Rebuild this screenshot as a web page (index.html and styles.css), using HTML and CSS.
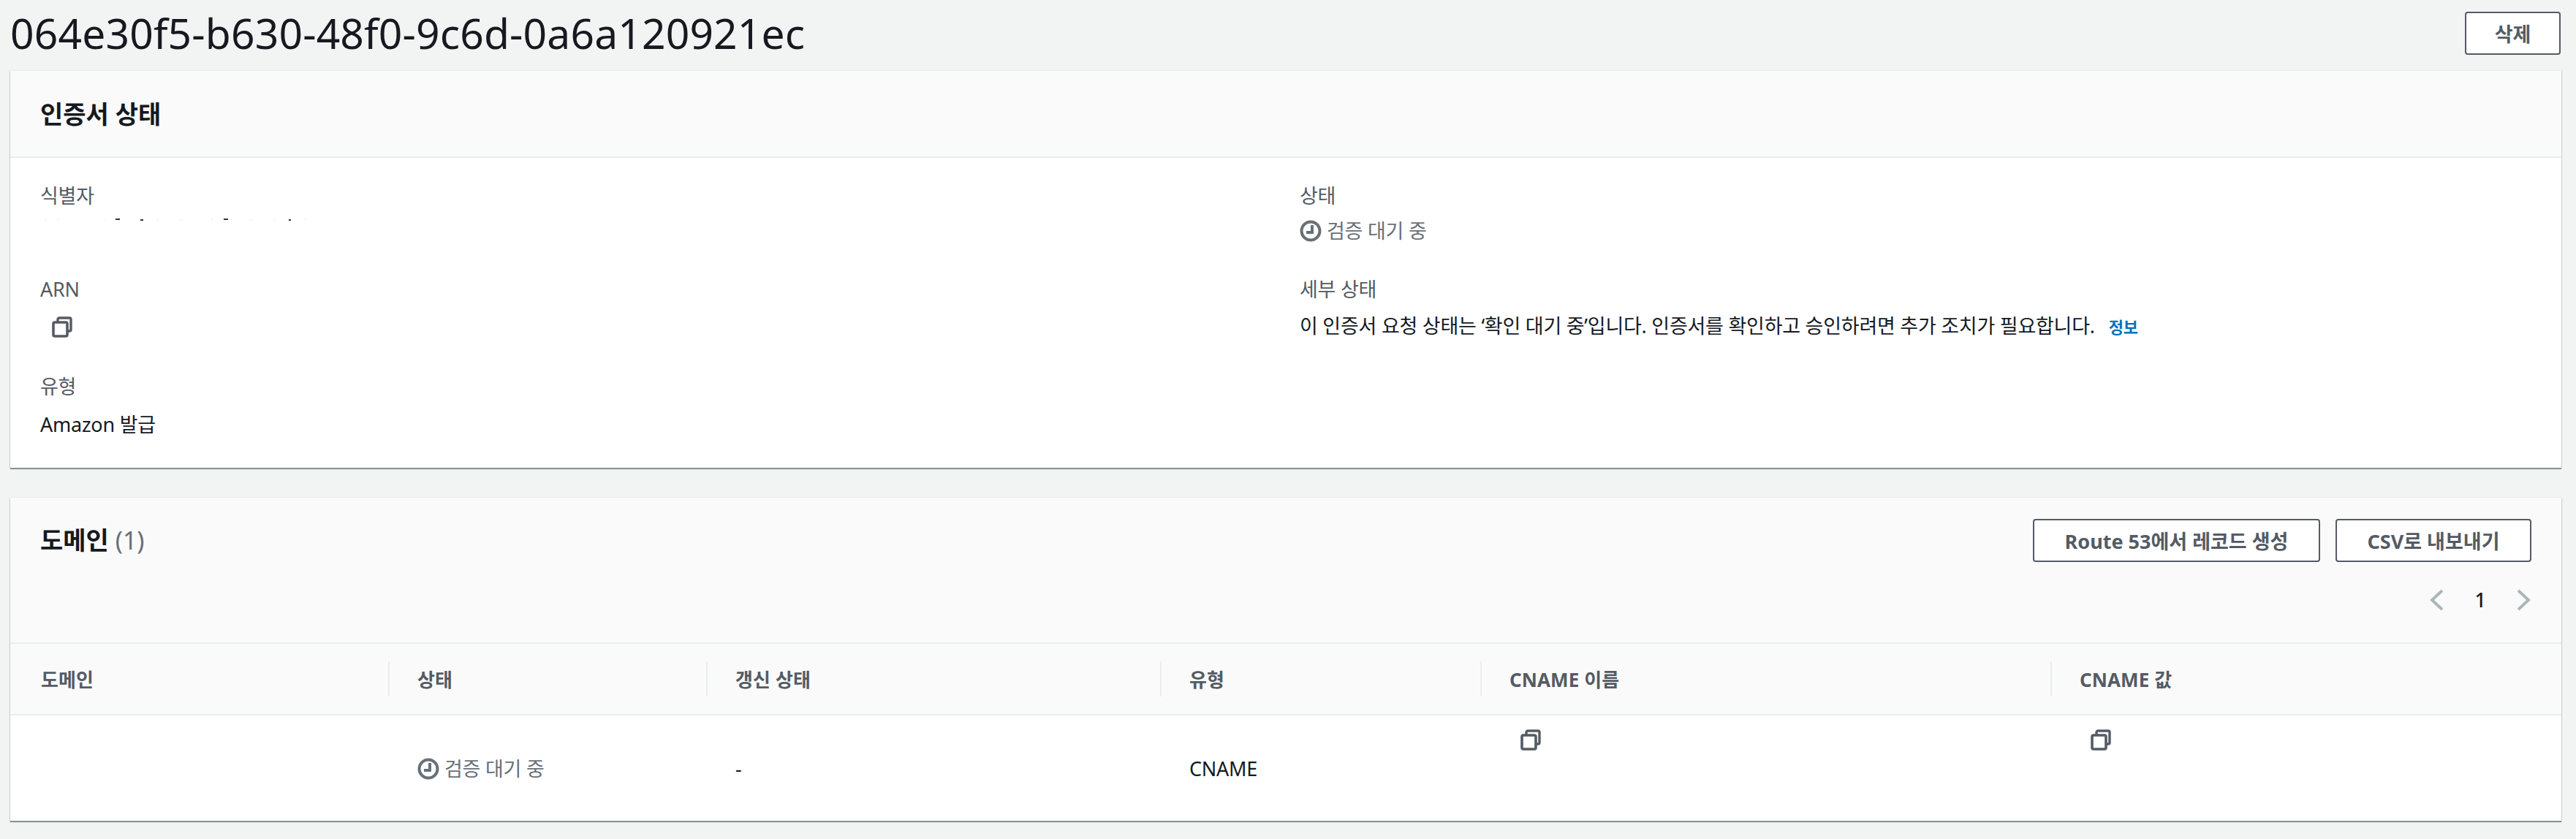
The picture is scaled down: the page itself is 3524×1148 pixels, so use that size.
FILE: index.html
```html
<!DOCTYPE html>
<html lang="ko">
<head>
  <meta charset="UTF-8">
  <meta name="viewport" content="width=device-width, initial-scale=1.0">
  <title>인증서 상태</title>
  <link rel="stylesheet" href="styles.css">
</head>
<body>
  <svg class="icon-defs" width="0" height="0">
    <symbol id="copy" viewBox="0 0 30 30">
      <path d="M9 8V5a2 2 0 0 1 2-2h14a2 2 0 0 1 2 2v14a2 2 0 0 1-2 2h-3" fill="none" stroke="#545b64" stroke-width="3.4"/>
      <rect x="3" y="9" width="19" height="19" rx="2" fill="none" stroke="#545b64" stroke-width="3.6"/>
    </symbol>
    <symbol id="clock" viewBox="0 0 30 32">
      <circle cx="15" cy="16" r="12.5" fill="none" stroke="#687078" stroke-width="4"/>
      <path d="M17 8v10H9" fill="none" stroke="#687078" stroke-width="4"/>
    </symbol>
  </svg>

  <div class="page-header">
    <h1>064e30f5-b630-48f0-9c6d-0a6a120921ec</h1>
    <button class="btn btn-delete">삭제</button>
  </div>

  <section class="panel panel-status">
    <div class="panel-header">
      <h2>인증서 상태</h2>
    </div>
    <div class="details">
      <div class="details-col">
        <div class="field field-first">
          <div class="label">식별자</div>
          <svg class="specks" width="380" height="4" viewBox="0 0 380 4">
            <rect x="7" y="1" width="2" height="1" fill="#ddd"/>
            <rect x="24" y="1" width="2" height="1" fill="#ddd"/>
            <rect x="87" y="1" width="1" height="1" fill="#ddd"/>
            <rect x="103" y="0" width="6" height="2" fill="#333"/>
            <rect x="137" y="1" width="4" height="2" fill="#333"/>
            <rect x="160" y="1" width="2" height="1" fill="#ddd"/>
            <rect x="191" y="1" width="2" height="1" fill="#ddd"/>
            <rect x="234" y="1" width="2" height="1" fill="#ddd"/>
            <rect x="251" y="0" width="6" height="2" fill="#333"/>
            <rect x="261" y="1" width="1" height="1" fill="#ddd"/>
            <rect x="288" y="1" width="2" height="1" fill="#ddd"/>
            <rect x="320" y="1" width="2" height="1" fill="#ddd"/>
            <rect x="340" y="1" width="3" height="2" fill="#333"/>
            <rect x="362" y="1" width="2" height="1" fill="#ddd"/>
          </svg>
        </div>
        <div class="field field-arn">
          <div class="label">ARN</div>
          <svg class="copy-icon copy-arn"><use href="#copy"/></svg>
        </div>
        <div class="field">
          <div class="label">유형</div>
          <div class="value value-type">Amazon 발급</div>
        </div>
      </div>
      <div class="details-col">
        <div class="field field-first">
          <div class="label">상태</div>
          <div class="status status-detail"><svg class="clock-icon"><use href="#clock"/></svg>검증 대기 중</div>
        </div>
        <div class="field">
          <div class="label">세부 상태</div>
          <div class="value">이 인증서 요청 상태는 ‘확인 대기 중’입니다. 인증서를 확인하고 승인하려면 추가 조치가 필요합니다.<a class="info-link" href="#">정보</a></div>
        </div>
      </div>
    </div>
  </section>

  <section class="panel panel-domains">
    <div class="panel-header domains-header">
      <h2>도메인 <span class="count">(1)</span></h2>
      <div class="domains-tools">
        <div class="actions">
          <button class="btn btn-route">Route 53에서 레코드 생성</button>
          <button class="btn btn-csv">CSV로 내보내기</button>
        </div>
        <div class="pagination">
          <svg class="chevron" viewBox="0 0 20 30"><path d="M18 2 4 15l14 13" fill="none" stroke="#aab7b8" stroke-width="4"/></svg>
          <span class="page-num">1</span>
          <svg class="chevron" viewBox="0 0 20 30"><path d="M2 2l14 13L2 28" fill="none" stroke="#aab7b8" stroke-width="4"/></svg>
        </div>
      </div>
    </div>
    <div class="table">
      <div class="row row-head">
        <div class="th">도메인</div>
        <div class="th">상태</div>
        <div class="th">갱신 상태</div>
        <div class="th">유형</div>
        <div class="th">CNAME 이름</div>
        <div class="th">CNAME 값</div>
      </div>
      <div class="row row-body">
        <div class="td"></div>
        <div class="td"><div class="status"><svg class="clock-icon"><use href="#clock"/></svg>검증 대기 중</div></div>
        <div class="td">-</div>
        <div class="td">CNAME</div>
        <div class="td td-top"><svg class="copy-icon"><use href="#copy"/></svg></div>
        <div class="td td-top"><svg class="copy-icon"><use href="#copy"/></svg></div>
      </div>
    </div>
  </section>
</body>
</html>
```

FILE: styles.css
```css
body {
  margin: 0;
  padding: 0 20px 0 14px;
  height: 1148px;
  box-sizing: border-box;
  overflow: hidden;
  background-color: #f2f3f3;
  color: #16191f;
  font-family: "Noto Sans", "Noto Sans CJK KR", sans-serif;
  font-size: 27px;
  letter-spacing: -0.25px;
  line-height: 40px;
}
.icon-defs {
  display: block;
  position: absolute;
}
.page-header {
  display: flex;
  justify-content: space-between;
  align-items: flex-start;
  height: 97px;
}
h1 {
  margin: 0;
  padding-top: 7px;
  font-size: 57px;
  line-height: 76px;
  font-weight: 400;
  letter-spacing: 0.12px;
}
.btn {
  box-sizing: border-box;
  height: 59px;
  padding: 0;
  border: 2px solid #545b64;
  border-radius: 4px;
  background-color: #fff;
  color: #545b64;
  font-family: inherit;
  font-size: 27px;
  font-weight: 700;
}
.btn-delete {
  width: 131px;
  margin: 16px 1px 0 0;
}
.btn-route {
  width: 393px;
}
.btn-csv {
  width: 268px;
}
.panel {
  background-color: #fff;
  box-shadow: 0 2px 1px #879596, 0 -1px 1px #eaeded, 1px 0 1px #d5dbdb, -1px 0 1px #d5dbdb;
}
.panel-status {
  height: 543px;
  margin-bottom: 41px;
}
.panel-domains {
  height: 442px;
}
.panel-header {
  box-sizing: border-box;
  height: 119px;
  padding: 0 41px;
  display: flex;
  align-items: center;
  background-color: #fafafa;
  border-bottom: 2px solid #eaeded;
}
h2 {
  margin: 0;
  font-size: 34px;
  font-weight: 700;
  letter-spacing: 0;
  line-height: 44px;
}
.count {
  color: #687078;
  font-weight: 400;
}
.details {
  display: grid;
  grid-template-columns: 1723px 1fr;
  padding: 32px 41px 0;
}
.field {
  height: 132px;
}
.field-first {
  height: 128px;
}
.field-arn {
  height: 133px;
}
.label {
  color: #545b64;
  height: 50px;
}
.value {
  white-space: nowrap;
}
.value-type {
  margin-top: 2px;
}
.specks {
  display: block;
  margin-top: 1px;
  overflow: visible;
}
.copy-icon {
  display: block;
  width: 30px;
  height: 30px;
}
.copy-arn {
  margin: 6px 0 0 15px;
}
.status {
  display: flex;
  align-items: center;
  gap: 7px;
  color: #687078;
}
.status-detail {
  margin-top: -2px;
}
.clock-icon {
  width: 30px;
  height: 32px;
  flex: none;
}
.info-link {
  margin-left: 19px;
  color: #0073bb;
  font-size: 22px;
  font-weight: 700;
  text-decoration: none;
}
.domains-header {
  height: 200px;
  justify-content: space-between;
  align-items: flex-start;
  padding: 29px 41px 0;
}
.domains-header h2 {
  margin-top: 7px;
}
.domains-tools {
  display: flex;
  flex-direction: column;
  align-items: flex-end;
}
.actions {
  display: flex;
  gap: 21px;
}
.pagination {
  display: flex;
  align-items: center;
  margin-top: 32px;
}
.chevron {
  width: 20px;
  height: 30px;
}
.page-num {
  width: 100px;
  text-align: center;
  font-weight: 500;
}
.row {
  display: grid;
  grid-template-columns: 517px 435px 621px 438px 780px 1fr;
}
.row-head {
  box-sizing: border-box;
  height: 98px;
  align-items: center;
  background-color: #fafafa;
  border-bottom: 2px solid #eaeded;
}
.th {
  height: 48px;
  padding-left: 38px;
  border-left: 2px solid #eaeded;
  color: #545b64;
  font-weight: 700;
  font-size: 26px;
  letter-spacing: 0.1px;
  line-height: 50px;
}
.th:first-child {
  border-left: 0;
  padding-left: 42px;
}
.row-body {
  height: 144px;
  align-items: center;
}
.td {
  padding-left: 40px;
  padding-top: 2px;
}
.td-top {
  align-self: start;
  padding: 18px 0 0 54px;
}
```
